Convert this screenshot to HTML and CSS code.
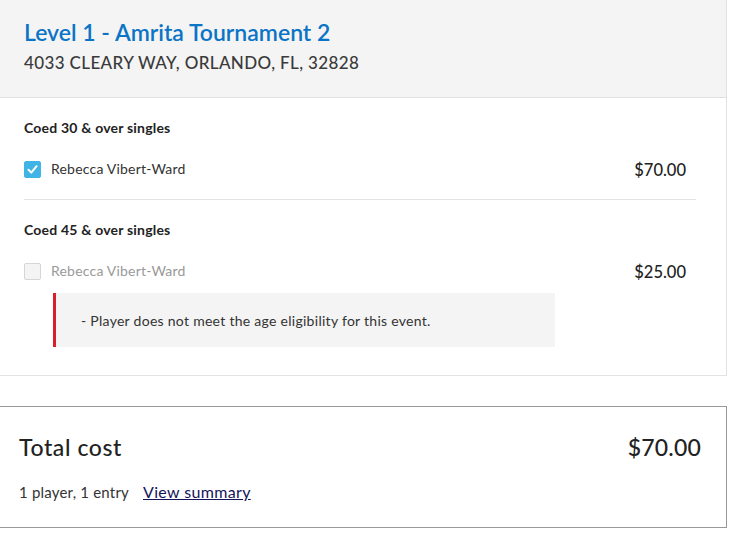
FILE: index.html
```html
<!DOCTYPE html>
<html lang="en">
<head>
<meta charset="utf-8">
<title>Entry</title>
<link rel="stylesheet" href="styles.css">
</head>
<body>
<div class="page">
  <section class="card">
    <header class="card-head">
      <h1 class="title">Level 1 - Amrita Tournament 2</h1>
      <p class="address">4033 CLEARY WAY, ORLANDO, FL, 32828</p>
    </header>
    <div class="card-body">
      <div class="event">
        <h2 class="event-name">Coed 30 &amp; over singles</h2>
        <div class="entry">
          <label class="player">
            <span class="box checked">
              <svg viewBox="0 0 17 17" width="17" height="17"><path d="M4.5 8.8 L7.3 11.6 L12.6 5.2" fill="none" stroke="#fff" stroke-width="2" stroke-linecap="round" stroke-linejoin="round"/></svg>
            </span>
            <span class="name">Rebecca Vibert-Ward</span>
          </label>
          <span class="price">$70.00</span>
        </div>
      </div>
      <div class="event last">
        <h2 class="event-name">Coed 45 &amp; over singles</h2>
        <div class="entry">
          <label class="player disabled">
            <span class="box"></span>
            <span class="name">Rebecca Vibert-Ward</span>
          </label>
          <span class="price">$25.00</span>
        </div>
        <div class="error">- Player does not meet the age eligibility for this event.</div>
      </div>
    </div>
  </section>
  <section class="total">
    <div class="total-row">
      <span class="total-label">Total cost</span>
      <span class="total-amount">$70.00</span>
    </div>
    <div class="total-meta">
      <span>1 player, 1 entry</span>
      <a class="summary" href="#">View summary</a>
    </div>
  </section>
</div>
</body>
</html>
```

FILE: styles.css
```css
* { box-sizing: border-box; }
html, body { margin: 0; padding: 0; background: #fff; }
body { font-family: Lato, "Open Sans", sans-serif; color: #333; }
.page { width: 727px; }

.card {
  border-right: 1px solid #e3e3e3;
  border-bottom: 1px solid #e3e3e3;
}
.card-head {
  background: #f4f4f4;
  border-bottom: 1px solid #e0e0e0;
  padding: 18px 24px 0;
  height: 98px;
}
.title {
  margin: 0;
  font-size: 23px;
  font-weight: 600;
  color: #0b74c6;
  line-height: 28px;
}
.address {
  margin: 6px 0 0;
  font-size: 17px;
  font-weight: 500;
  color: #3a3a3a;
  line-height: 22px;
  letter-spacing: 0.37px;
}
.card-body { padding: 0 30px 28px 24px; }

.event { border-bottom: 1px solid #e3e3e3; padding: 20px 0 20px; }
.event.last { border-bottom: none; padding-bottom: 0; }
.event-name {
  margin: 0;
  font-size: 14px;
  font-weight: 700;
  color: #222;
  line-height: 20px;
  letter-spacing: 0.2px;
}
.entry {
  display: flex;
  align-items: center;
  justify-content: space-between;
  margin-top: 21px;
  padding-right: 10px;
  height: 20px;
}
.player { display: flex; align-items: center; gap: 10px; }
.box {
  width: 17px; height: 17px;
  border: 1px solid #d6d6d6;
  border-radius: 2px;
  background: #f4f4f4;
  display: block;
}
.box.checked { background: #41b4e6; border-color: #41b4e6; }
.box svg { display: block; margin: -1px; }
.name { font-size: 14px; color: #333; line-height: 18px; letter-spacing: 0.2px; }
.disabled .name { color: #999; }
.price { font-size: 16.5px; font-weight: 500; color: #222; line-height: 20px; padding-top: 2px; }

.error {
  margin: 12px 0 0 29px;
  width: 502px;
  height: 54px;
  background: #f4f4f4;
  border-left: 3px solid #d7202c;
  padding: 0 0 0 25px;
  display: flex;
  align-items: center;
  font-size: 14px;
  letter-spacing: 0.28px;
  color: #333;
}

.total {
  margin-top: 30px;
  border: 1px solid #999;
  border-left: none;
  height: 122px;
  padding: 26px 25px 0 19px;
}
.total-row {
  display: flex;
  justify-content: space-between;
  align-items: center;
}
.total-label { font-size: 23px; font-weight: 500; color: #222; line-height: 28px; letter-spacing: 0.6px; }
.total-amount { font-size: 23px; font-weight: 500; color: #222; line-height: 28px; letter-spacing: 0.2px; }
.total-meta {
  margin-top: 21px;
  display: flex;
  gap: 14px;
  font-size: 15px;
  color: #333;
  line-height: 20px;
  letter-spacing: 0.2px;
}
.summary { color: #14145a; text-decoration: underline; font-size: 16px; letter-spacing: 0.35px; }
```
